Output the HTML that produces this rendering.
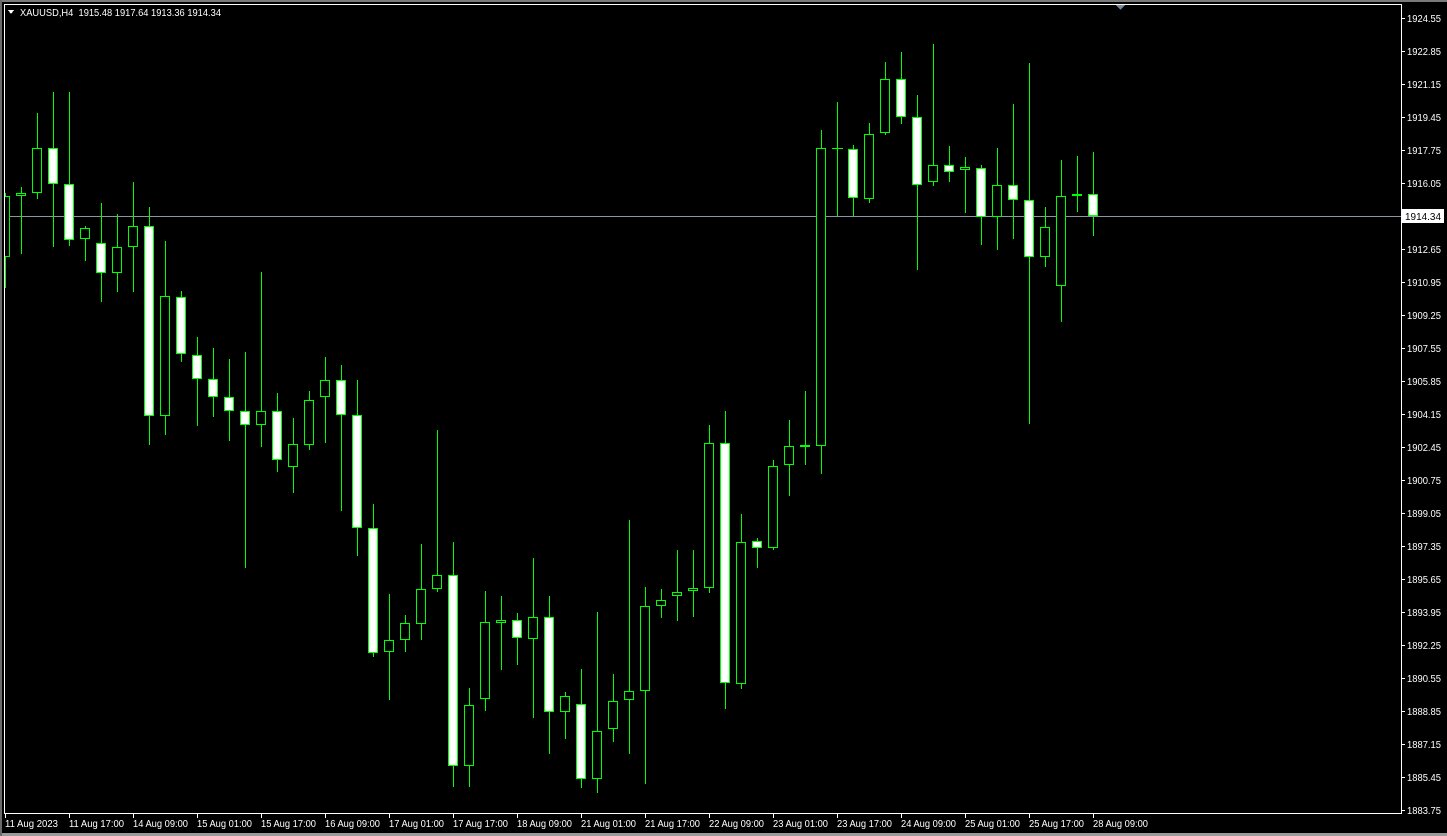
<!DOCTYPE html>
<html><head><meta charset="utf-8"><style>
html,body{margin:0;padding:0;background:#000;width:1447px;height:836px;overflow:hidden}
svg{display:block}
text{font-family:"Liberation Sans",sans-serif;font-size:10px;fill:#fff}
.p{font-size:10px}
</style></head><body>
<svg width="1447" height="836" viewBox="0 0 1447 836" shape-rendering="crispEdges">
<rect x="0" y="0" width="1447" height="836" fill="#000"/>
<rect x="0" y="0" width="1447" height="2" fill="#7a7a7a"/>
<rect x="0" y="833" width="1447" height="3" fill="#9a9a9a"/>
<rect x="0" y="0" width="2" height="836" fill="#6a6a6a"/>
<polygon points="1116,5 1125,5 1120.5,10" fill="#778899"/>
<line x1="4" y1="216.5" x2="1401" y2="216.5" stroke="#8a96a3" stroke-width="1"/>
<g clip-path="url(#c)">
<clipPath id="c"><rect x="5" y="5" width="1396" height="808"/></clipPath>
<g stroke="#00ff00" stroke-width="1">
<line x1="5.5" y1="193" x2="5.5" y2="288"/><rect x="0.5" y="196.5" width="9" height="60" fill="#000"/>
<line x1="21.5" y1="187" x2="21.5" y2="254"/><rect x="16.5" y="193.5" width="9" height="2" fill="#000"/>
<line x1="37.5" y1="113" x2="37.5" y2="199"/><rect x="32.5" y="148.5" width="9" height="44" fill="#000"/>
<line x1="53.5" y1="92" x2="53.5" y2="247"/><rect x="48.5" y="148.5" width="9" height="35" fill="#fff"/>
<line x1="69.5" y1="92" x2="69.5" y2="246"/><rect x="64.5" y="184.5" width="9" height="55" fill="#fff"/>
<line x1="85.5" y1="226" x2="85.5" y2="261"/><rect x="80.5" y="228.5" width="9" height="10" fill="#000"/>
<line x1="101.5" y1="203" x2="101.5" y2="302"/><rect x="96.5" y="243.5" width="9" height="29" fill="#fff"/>
<line x1="117.5" y1="214" x2="117.5" y2="292"/><rect x="112.5" y="247.5" width="9" height="25" fill="#000"/>
<line x1="133.5" y1="182" x2="133.5" y2="292"/><rect x="128.5" y="226.5" width="9" height="20" fill="#000"/>
<line x1="149.5" y1="207" x2="149.5" y2="445"/><rect x="144.5" y="226.5" width="9" height="189" fill="#fff"/>
<line x1="165.5" y1="241" x2="165.5" y2="435"/><rect x="160.5" y="296.5" width="9" height="119" fill="#000"/>
<line x1="181.5" y1="291" x2="181.5" y2="362"/><rect x="176.5" y="297.5" width="9" height="56" fill="#fff"/>
<line x1="197.5" y1="337" x2="197.5" y2="426"/><rect x="192.5" y="355.5" width="9" height="23" fill="#fff"/>
<line x1="213.5" y1="348" x2="213.5" y2="417"/><rect x="208.5" y="379.5" width="9" height="17" fill="#fff"/>
<line x1="229.5" y1="359" x2="229.5" y2="441"/><rect x="224.5" y="397.5" width="9" height="13" fill="#fff"/>
<line x1="245.5" y1="352" x2="245.5" y2="568"/><rect x="240.5" y="411.5" width="9" height="13" fill="#fff"/>
<line x1="261.5" y1="272" x2="261.5" y2="447"/><rect x="256.5" y="411.5" width="9" height="13" fill="#000"/>
<line x1="277.5" y1="393" x2="277.5" y2="472"/><rect x="272.5" y="411.5" width="9" height="48" fill="#fff"/>
<line x1="293.5" y1="418" x2="293.5" y2="493"/><rect x="288.5" y="444.5" width="9" height="22" fill="#000"/>
<line x1="309.5" y1="391" x2="309.5" y2="450"/><rect x="304.5" y="400.5" width="9" height="44" fill="#000"/>
<line x1="325.5" y1="357" x2="325.5" y2="443"/><rect x="320.5" y="380.5" width="9" height="16" fill="#000"/>
<line x1="341.5" y1="365" x2="341.5" y2="511"/><rect x="336.5" y="380.5" width="9" height="34" fill="#fff"/>
<line x1="357.5" y1="380" x2="357.5" y2="556"/><rect x="352.5" y="415.5" width="9" height="112" fill="#fff"/>
<line x1="373.5" y1="504" x2="373.5" y2="657"/><rect x="368.5" y="528.5" width="9" height="124" fill="#fff"/>
<line x1="389.5" y1="594" x2="389.5" y2="700"/><rect x="384.5" y="640.5" width="9" height="11" fill="#000"/>
<line x1="405.5" y1="615" x2="405.5" y2="652"/><rect x="400.5" y="623.5" width="9" height="16" fill="#000"/>
<line x1="421.5" y1="544" x2="421.5" y2="640"/><rect x="416.5" y="589.5" width="9" height="34" fill="#000"/>
<line x1="437.5" y1="430" x2="437.5" y2="592"/><rect x="432.5" y="575.5" width="9" height="13" fill="#000"/>
<line x1="453.5" y1="542" x2="453.5" y2="787"/><rect x="448.5" y="575.5" width="9" height="190" fill="#fff"/>
<line x1="469.5" y1="688" x2="469.5" y2="787"/><rect x="464.5" y="705.5" width="9" height="60" fill="#000"/>
<line x1="485.5" y1="591" x2="485.5" y2="711"/><rect x="480.5" y="622.5" width="9" height="76" fill="#000"/>
<line x1="501.5" y1="596" x2="501.5" y2="670"/><rect x="496.5" y="620.5" width="9" height="2" fill="#000"/>
<line x1="517.5" y1="613" x2="517.5" y2="665"/><rect x="512.5" y="620.5" width="9" height="17" fill="#fff"/>
<line x1="533.5" y1="558" x2="533.5" y2="718"/><rect x="528.5" y="617.5" width="9" height="21" fill="#000"/>
<line x1="549.5" y1="596" x2="549.5" y2="754"/><rect x="544.5" y="617.5" width="9" height="94" fill="#fff"/>
<line x1="565.5" y1="692" x2="565.5" y2="739"/><rect x="560.5" y="696.5" width="9" height="15" fill="#000"/>
<line x1="581.5" y1="669" x2="581.5" y2="788"/><rect x="576.5" y="704.5" width="9" height="74" fill="#fff"/>
<line x1="597.5" y1="612" x2="597.5" y2="793"/><rect x="592.5" y="731.5" width="9" height="47" fill="#000"/>
<line x1="613.5" y1="674" x2="613.5" y2="742"/><rect x="608.5" y="701.5" width="9" height="27" fill="#000"/>
<line x1="629.5" y1="520" x2="629.5" y2="754"/><rect x="624.5" y="691.5" width="9" height="8" fill="#000"/>
<line x1="645.5" y1="587" x2="645.5" y2="784"/><rect x="640.5" y="606.5" width="9" height="84" fill="#000"/>
<line x1="661.5" y1="589" x2="661.5" y2="618"/><rect x="656.5" y="600.5" width="9" height="5" fill="#000"/>
<line x1="677.5" y1="550" x2="677.5" y2="621"/><rect x="672.5" y="592.5" width="9" height="3" fill="#000"/>
<line x1="693.5" y1="550" x2="693.5" y2="617"/><rect x="688.5" y="588.5" width="9" height="2" fill="#000"/>
<line x1="709.5" y1="425" x2="709.5" y2="593"/><rect x="704.5" y="443.5" width="9" height="144" fill="#000"/>
<line x1="725.5" y1="411" x2="725.5" y2="709"/><rect x="720.5" y="443.5" width="9" height="239" fill="#fff"/>
<line x1="741.5" y1="514" x2="741.5" y2="689"/><rect x="736.5" y="542.5" width="9" height="141" fill="#000"/>
<line x1="757.5" y1="538" x2="757.5" y2="568"/><rect x="752.5" y="541.5" width="9" height="6" fill="#fff"/>
<line x1="773.5" y1="460" x2="773.5" y2="550"/><rect x="768.5" y="466.5" width="9" height="81" fill="#000"/>
<line x1="789.5" y1="420" x2="789.5" y2="496"/><rect x="784.5" y="446.5" width="9" height="18" fill="#000"/>
<line x1="805.5" y1="391" x2="805.5" y2="465"/><rect x="800.5" y="445.5" width="9" height="1" fill="#000"/>
<line x1="821.5" y1="130" x2="821.5" y2="474"/><rect x="816.5" y="148.5" width="9" height="297" fill="#000"/>
<line x1="837.5" y1="102" x2="837.5" y2="216"/><line x1="832" y1="148.5" x2="843" y2="148.5"/>
<line x1="853.5" y1="145" x2="853.5" y2="216"/><rect x="848.5" y="149.5" width="9" height="48" fill="#fff"/>
<line x1="869.5" y1="123" x2="869.5" y2="203"/><rect x="864.5" y="134.5" width="9" height="64" fill="#000"/>
<line x1="885.5" y1="62" x2="885.5" y2="135"/><rect x="880.5" y="79.5" width="9" height="53" fill="#000"/>
<line x1="901.5" y1="52" x2="901.5" y2="124"/><rect x="896.5" y="79.5" width="9" height="37" fill="#fff"/>
<line x1="917.5" y1="95" x2="917.5" y2="270"/><rect x="912.5" y="117.5" width="9" height="67" fill="#fff"/>
<line x1="933.5" y1="44" x2="933.5" y2="186"/><rect x="928.5" y="165.5" width="9" height="16" fill="#000"/>
<line x1="949.5" y1="146" x2="949.5" y2="182"/><rect x="944.5" y="165.5" width="9" height="6" fill="#fff"/>
<line x1="965.5" y1="157" x2="965.5" y2="213"/><rect x="960.5" y="167.5" width="9" height="2" fill="#000"/>
<line x1="981.5" y1="165" x2="981.5" y2="245"/><rect x="976.5" y="168.5" width="9" height="48" fill="#fff"/>
<line x1="997.5" y1="148" x2="997.5" y2="250"/><rect x="992.5" y="185.5" width="9" height="31" fill="#000"/>
<line x1="1013.5" y1="104" x2="1013.5" y2="239"/><rect x="1008.5" y="185.5" width="9" height="14" fill="#fff"/>
<line x1="1029.5" y1="63" x2="1029.5" y2="424"/><rect x="1024.5" y="200.5" width="9" height="56" fill="#fff"/>
<line x1="1045.5" y1="207" x2="1045.5" y2="267"/><rect x="1040.5" y="227.5" width="9" height="29" fill="#000"/>
<line x1="1061.5" y1="160" x2="1061.5" y2="322"/><rect x="1056.5" y="196.5" width="9" height="89" fill="#000"/>
<line x1="1077.5" y1="156" x2="1077.5" y2="212"/><rect x="1072.5" y="194.5" width="9" height="1" fill="#000"/>
<line x1="1093.5" y1="152" x2="1093.5" y2="236"/><rect x="1088.5" y="194.5" width="9" height="21" fill="#fff"/>
</g>
</g>
<rect x="4.5" y="4.5" width="1397" height="809" fill="none" stroke="#fff" stroke-width="1"/>
<rect x="1402" y="209" width="42" height="14" fill="#fff"/>
<text x="1405" y="220" textLength="36" lengthAdjust="spacingAndGlyphs" style="fill:#000">1914.34</text>
<polygon points="8,10 14,10 11,14" fill="#fff"/>
<text x="20" y="16" textLength="201" lengthAdjust="spacingAndGlyphs">XAUUSD,H4&#160; 1915.48 1917.64 1913.36 1914.34</text>
<g stroke="#fff" stroke-width="1">
<line x1="1402" y1="18.5" x2="1405" y2="18.5"/><line x1="1402" y1="51.5" x2="1405" y2="51.5"/><line x1="1402" y1="84.5" x2="1405" y2="84.5"/><line x1="1402" y1="117.5" x2="1405" y2="117.5"/><line x1="1402" y1="150.5" x2="1405" y2="150.5"/><line x1="1402" y1="183.5" x2="1405" y2="183.5"/><line x1="1402" y1="249.5" x2="1405" y2="249.5"/><line x1="1402" y1="282.5" x2="1405" y2="282.5"/><line x1="1402" y1="315.5" x2="1405" y2="315.5"/><line x1="1402" y1="348.5" x2="1405" y2="348.5"/><line x1="1402" y1="381.5" x2="1405" y2="381.5"/><line x1="1402" y1="414.5" x2="1405" y2="414.5"/><line x1="1402" y1="447.5" x2="1405" y2="447.5"/><line x1="1402" y1="480.5" x2="1405" y2="480.5"/><line x1="1402" y1="513.5" x2="1405" y2="513.5"/><line x1="1402" y1="546.5" x2="1405" y2="546.5"/><line x1="1402" y1="579.5" x2="1405" y2="579.5"/><line x1="1402" y1="612.5" x2="1405" y2="612.5"/><line x1="1402" y1="645.5" x2="1405" y2="645.5"/><line x1="1402" y1="678.5" x2="1405" y2="678.5"/><line x1="1402" y1="711.5" x2="1405" y2="711.5"/><line x1="1402" y1="744.5" x2="1405" y2="744.5"/><line x1="1402" y1="777.5" x2="1405" y2="777.5"/><line x1="1402" y1="810.5" x2="1405" y2="810.5"/>
</g>
<g>
<text x="1407" y="22" textLength="34" lengthAdjust="spacingAndGlyphs">1924.55</text><text x="1407" y="55" textLength="34" lengthAdjust="spacingAndGlyphs">1922.85</text><text x="1407" y="88" textLength="34" lengthAdjust="spacingAndGlyphs">1921.15</text><text x="1407" y="121" textLength="34" lengthAdjust="spacingAndGlyphs">1919.45</text><text x="1407" y="154" textLength="34" lengthAdjust="spacingAndGlyphs">1917.75</text><text x="1407" y="187" textLength="34" lengthAdjust="spacingAndGlyphs">1916.05</text><text x="1407" y="253" textLength="34" lengthAdjust="spacingAndGlyphs">1912.65</text><text x="1407" y="286" textLength="34" lengthAdjust="spacingAndGlyphs">1910.95</text><text x="1407" y="319" textLength="34" lengthAdjust="spacingAndGlyphs">1909.25</text><text x="1407" y="352" textLength="34" lengthAdjust="spacingAndGlyphs">1907.55</text><text x="1407" y="385" textLength="34" lengthAdjust="spacingAndGlyphs">1905.85</text><text x="1407" y="418" textLength="34" lengthAdjust="spacingAndGlyphs">1904.15</text><text x="1407" y="451" textLength="34" lengthAdjust="spacingAndGlyphs">1902.45</text><text x="1407" y="484" textLength="34" lengthAdjust="spacingAndGlyphs">1900.75</text><text x="1407" y="517" textLength="34" lengthAdjust="spacingAndGlyphs">1899.05</text><text x="1407" y="550" textLength="34" lengthAdjust="spacingAndGlyphs">1897.35</text><text x="1407" y="583" textLength="34" lengthAdjust="spacingAndGlyphs">1895.65</text><text x="1407" y="616" textLength="34" lengthAdjust="spacingAndGlyphs">1893.95</text><text x="1407" y="649" textLength="34" lengthAdjust="spacingAndGlyphs">1892.25</text><text x="1407" y="682" textLength="34" lengthAdjust="spacingAndGlyphs">1890.55</text><text x="1407" y="715" textLength="34" lengthAdjust="spacingAndGlyphs">1888.85</text><text x="1407" y="748" textLength="34" lengthAdjust="spacingAndGlyphs">1887.15</text><text x="1407" y="781" textLength="34" lengthAdjust="spacingAndGlyphs">1885.45</text><text x="1407" y="814" textLength="34" lengthAdjust="spacingAndGlyphs">1883.75</text>
</g>
<g stroke="#fff" stroke-width="1">
<line x1="5.5" y1="814" x2="5.5" y2="818"/><line x1="69.5" y1="814" x2="69.5" y2="818"/><line x1="133.5" y1="814" x2="133.5" y2="818"/><line x1="197.5" y1="814" x2="197.5" y2="818"/><line x1="261.5" y1="814" x2="261.5" y2="818"/><line x1="325.5" y1="814" x2="325.5" y2="818"/><line x1="389.5" y1="814" x2="389.5" y2="818"/><line x1="453.5" y1="814" x2="453.5" y2="818"/><line x1="517.5" y1="814" x2="517.5" y2="818"/><line x1="581.5" y1="814" x2="581.5" y2="818"/><line x1="645.5" y1="814" x2="645.5" y2="818"/><line x1="709.5" y1="814" x2="709.5" y2="818"/><line x1="773.5" y1="814" x2="773.5" y2="818"/><line x1="837.5" y1="814" x2="837.5" y2="818"/><line x1="901.5" y1="814" x2="901.5" y2="818"/><line x1="965.5" y1="814" x2="965.5" y2="818"/><line x1="1029.5" y1="814" x2="1029.5" y2="818"/><line x1="1093.5" y1="814" x2="1093.5" y2="818"/>
</g>
<g>
<text x="5" y="827" textLength="53" lengthAdjust="spacingAndGlyphs">11 Aug 2023</text><text x="69" y="827" textLength="55" lengthAdjust="spacingAndGlyphs">11 Aug 17:00</text><text x="133" y="827" textLength="55" lengthAdjust="spacingAndGlyphs">14 Aug 09:00</text><text x="197" y="827" textLength="55" lengthAdjust="spacingAndGlyphs">15 Aug 01:00</text><text x="261" y="827" textLength="55" lengthAdjust="spacingAndGlyphs">15 Aug 17:00</text><text x="325" y="827" textLength="55" lengthAdjust="spacingAndGlyphs">16 Aug 09:00</text><text x="389" y="827" textLength="55" lengthAdjust="spacingAndGlyphs">17 Aug 01:00</text><text x="453" y="827" textLength="55" lengthAdjust="spacingAndGlyphs">17 Aug 17:00</text><text x="517" y="827" textLength="55" lengthAdjust="spacingAndGlyphs">18 Aug 09:00</text><text x="581" y="827" textLength="55" lengthAdjust="spacingAndGlyphs">21 Aug 01:00</text><text x="645" y="827" textLength="55" lengthAdjust="spacingAndGlyphs">21 Aug 17:00</text><text x="709" y="827" textLength="55" lengthAdjust="spacingAndGlyphs">22 Aug 09:00</text><text x="773" y="827" textLength="55" lengthAdjust="spacingAndGlyphs">23 Aug 01:00</text><text x="837" y="827" textLength="55" lengthAdjust="spacingAndGlyphs">23 Aug 17:00</text><text x="901" y="827" textLength="55" lengthAdjust="spacingAndGlyphs">24 Aug 09:00</text><text x="965" y="827" textLength="55" lengthAdjust="spacingAndGlyphs">25 Aug 01:00</text><text x="1029" y="827" textLength="55" lengthAdjust="spacingAndGlyphs">25 Aug 17:00</text><text x="1093" y="827" textLength="55" lengthAdjust="spacingAndGlyphs">28 Aug 09:00</text>
</g>
</svg>
</body></html>
